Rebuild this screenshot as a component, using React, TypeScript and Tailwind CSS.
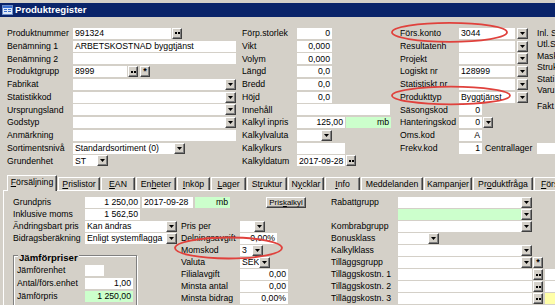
import React from "react";

const FONT = "font-[family-name:'Liberation_Sans',Arial,sans-serif]";

function Arrow() {
  return (
    <svg width="5" height="3" viewBox="0 0 5 3">
      <path d="M0 0h5L2.5 3z" fill="#000" />
    </svg>
  );
}

function Dots() {
  return (
    <svg width="5" height="2" viewBox="0 0 5 2">
      <rect x="0" y="0" width="2" height="2" fill="#000" />
      <rect x="3" y="0" width="2" height="2" fill="#000" />
    </svg>
  );
}

function Btn({ className = "", children }: { className?: string; children?: React.ReactNode }) {
  return (
    <div
      className={`h-[11px] shrink-0 flex items-center justify-center bg-[#d4d0c8] border border-t-white border-l-white border-r-[#404040] border-b-[#404040] shadow-[inset_-1px_-1px_#808080] ${className}`}
    >
      {children}
    </div>
  );
}

function Field({ className = "", right = false, children }: { className?: string; right?: boolean; children?: React.ReactNode }) {
  return (
    <div className={`h-[11px] shrink-0 flex items-center px-[2px] whitespace-nowrap overflow-hidden ${right ? "justify-end" : ""} ${className}`}>
      {children}
    </div>
  );
}

function Combo({ className, bg = "bg-white", children }: { className: string; bg?: string; children?: React.ReactNode }) {
  return (
    <div className="flex shrink-0">
      <Field className={`${className} ${bg}`}>{children}</Field>
      <Btn className="w-[11px]">
        <Arrow />
      </Btn>
    </div>
  );
}

function Row({ className = "h-[12.75px]", children }: { className?: string; children?: React.ReactNode }) {
  return <div className={`flex items-center shrink-0 ${className}`}>{children}</div>;
}

function Label({ className, children }: { className: string; children?: React.ReactNode }) {
  return <span className={`shrink-0 whitespace-nowrap ${className}`}>{children}</span>;
}

function AppIcon() {
  return (
    <svg width="11" height="10" viewBox="0 0 11 10">
      <rect x="0.5" y="0.5" width="10" height="9" fill="#dfe9f7" stroke="#6b8cc7" />
      <rect x="1" y="1" width="9" height="2" fill="#3a6fd0" />
      <rect x="2" y="4" width="3" height="1" fill="#3a6fd0" />
      <rect x="6" y="4" width="3" height="1" fill="#3a6fd0" />
      <rect x="2" y="6" width="3" height="1" fill="#3a6fd0" />
      <rect x="6" y="6" width="3" height="1" fill="#3a6fd0" />
    </svg>
  );
}

const tabs: { text: string; u: number; w: string }[] = [
  { text: "Prislistor", u: 0, w: "w-[42px]" },
  { text: "EAN", u: 0, w: "w-[34px]" },
  { text: "Enheter", u: 2, w: "w-[40px]" },
  { text: "Inköp", u: 0, w: "w-[33px]" },
  { text: "Lager", u: 0, w: "w-[35px]" },
  { text: "Struktur", u: 2, w: "w-[40px]" },
  { text: "Nycklar", u: 1, w: "w-[36px]" },
  { text: "Info", u: 0, w: "w-[35px]" },
  { text: "Meddelanden", u: -1, w: "w-[62px]" },
  { text: "Kampanjer", u: 6, w: "w-[48px]" },
  { text: "Produktfråga", u: 2, w: "w-[60px]" },
  { text: "Försälj", u: 0, w: "w-[40px]" },
];

function TabText({ text, u }: { text: string; u: number }) {
  if (u < 0) return <>{text}</>;
  return (
    <>
      {text.slice(0, u)}
      <span className="underline">{text[u]}</span>
      {text.slice(u + 1)}
    </>
  );
}

export default function App() {
  return (
    <div className={`relative w-[555px] h-[305px] overflow-hidden bg-[#d4d0c8] text-black text-[8.7px] leading-none ${FONT}`}>
      {/* title bar */}
      <div className="pt-[3px]">
        <div className="h-[14px] bg-[#0a246a] flex items-center pl-[2px] gap-[2px]">
          <AppIcon />
          <span className="text-white font-bold text-[9.6px]">Produktregister</span>
        </div>
      </div>

      {/* upper form */}
      <div className="h-[158px] pt-[10px] pl-[7px] flex">
        <div className="w-[235px] shrink-0 flex flex-col">
          <Row>
            <Label className="w-[66px]">Produktnummer</Label>
            <Field className="w-[98px] bg-white">991324</Field>
            <Btn className="w-[10px] ml-[1px]"><Dots /></Btn>
          </Row>
          <Row>
            <Label className="w-[66px]">Benämning 1</Label>
            <Field className="w-[163px] bg-white">ARBETSKOSTNAD byggtjänst</Field>
          </Row>
          <Row>
            <Label className="w-[66px]">Benämning 2</Label>
            <Field className="w-[163px] bg-white" />
          </Row>
          <Row>
            <Label className="w-[66px]">Produktgrupp</Label>
            <Field className="w-[54px] bg-white">8999</Field>
            <Btn className="w-[10px] ml-[1px]"><Dots /></Btn>
            <Btn className="w-[10px] ml-[2px] font-bold text-[9px]">*</Btn>
          </Row>
          <Row>
            <Label className="w-[66px]">Fabrikat</Label>
            <Combo className="w-[152px]" />
          </Row>
          <Row>
            <Label className="w-[66px]">Statistikkod</Label>
            <Combo className="w-[152px]" />
          </Row>
          <Row>
            <Label className="w-[66px]">Ursprungsland</Label>
            <Combo className="w-[152px]" />
          </Row>
          <Row>
            <Label className="w-[66px]">Godstyp</Label>
            <Combo className="w-[152px]" />
          </Row>
          <Row>
            <Label className="w-[66px]">Anmärkning</Label>
            <Field className="w-[163px] bg-white" />
          </Row>
          <Row>
            <Label className="w-[66px]">Sortimentsnivå</Label>
            <Combo className="w-[101px]">Standardsortiment (0)</Combo>
          </Row>
          <Row>
            <Label className="w-[66px]">Grundenhet</Label>
            <Combo className="w-[24px]">ST</Combo>
          </Row>
        </div>

        <div className="w-[158px] shrink-0 flex flex-col">
          {[
            ["Förp.storlek", "0"],
            ["Vikt", "0,000"],
            ["Volym", "0,000"],
            ["Längd", "0,0"],
            ["Bredd", "0,0"],
            ["Höjd", "0,0"],
          ].map(([l, v]) => (
            <Row key={l}>
              <Label className="w-[55px]">{l}</Label>
              <Field right className="w-[35px] bg-white">{v}</Field>
            </Row>
          ))}
          <Row>
            <Label className="w-[55px]">Innehåll</Label>
            <Field className="w-[93px] bg-white" />
          </Row>
          <Row>
            <Label className="w-[55px]">Kalkyl inpris</Label>
            <Field right className="w-[48px] bg-white">125,00</Field>
            <Field right className="w-[45px] ml-[1px] bg-[#ccffcc]">mb</Field>
          </Row>
          <Row>
            <Label className="w-[55px]">Kalkylvaluta</Label>
            <Combo className="w-[24px]" />
          </Row>
          <Row>
            <Label className="w-[55px]">Kalkylkurs</Label>
            <Field className="w-[48px] bg-white" />
          </Row>
          <Row>
            <Label className="w-[55px]">Kalkyldatum</Label>
            <Field className="w-[48px] bg-white">2017-09-28</Field>
            <Btn className="w-[10px] ml-[1px]"><Dots /></Btn>
          </Row>
        </div>

        <div className="w-[137px] shrink-0 flex flex-col">
          {[
            ["Förs.konto", "3044"],
            ["Resultatenh", ""],
            ["Projekt", ""],
            ["Logiskt nr", "128999"],
            ["Statistiskt nr", ""],
            ["Produkttyp", "Byggtjänst"],
          ].map(([l, v]) => (
            <Row key={l}>
              <Label className="w-[59px]">{l}</Label>
              <Field className="w-[56px] bg-white">{v}</Field>
              <Btn className="w-[11px] ml-[1.5px]"><Arrow /></Btn>
            </Row>
          ))}
          <Row>
            <Label className="w-[59px]">Säsongskod</Label>
            <Field right className="w-[23px] bg-white">0</Field>
          </Row>
          <Row>
            <Label className="w-[59px]">Hanteringskod</Label>
            <Field right className="w-[23px] bg-white">0</Field>
            <Btn className="w-[10px] ml-[1px]"><Arrow /></Btn>
          </Row>
          <Row>
            <Label className="w-[59px]">Oms.kod</Label>
            <Field right className="w-[23px] bg-white">A</Field>
          </Row>
          <Row>
            <Label className="w-[59px]">Frekv.kod</Label>
            <Field right className="w-[23px] bg-white">1</Field>
            <Label className="w-[52px] ml-[3px]">Centrallager</Label>
            <Field className="w-[18px] bg-white" />
          </Row>
        </div>

        <div className="flex-1 flex flex-col pt-[0.5px]">
          {["Inl. S", "Utl.S", "Mask", "Struk", "Stati", "Varu"].map((l) => (
            <Row key={l} className="h-[11.5px]">
              <Label className="w-auto">{l}</Label>
            </Row>
          ))}
          <Row className="h-[11.5px] mt-[4px]">
            <Label className="w-auto">Fakt</Label>
          </Row>
        </div>
      </div>

      {/* tabs */}
      <div className="relative z-10 h-[15px] pl-[7px] flex items-end">
        <div className="w-[50px] h-[16px] -mb-[1px] bg-[#d4d0c8] border-t border-l border-white border-r border-r-[#404040] shadow-[inset_-1px_0_#808080] flex items-center justify-center pb-[2px] shrink-0">
          <TabText text="Försäljning" u={0} />
        </div>
        {tabs.map((t) => (
          <div
            key={t.text}
            className={`${t.w} h-[13px] ml-[1px] border-t border-l border-white border-r border-r-[#404040] shadow-[inset_-1px_0_#808080] flex items-center justify-center shrink-0 whitespace-nowrap overflow-hidden`}
          >
            <TabText text={t.text} u={t.u} />
          </div>
        ))}
      </div>

      {/* tab panel */}
      <div className="ml-[3px] h-[115px] border-t border-l border-white pt-[5.5px] pl-[9px] flex">
        <div className="w-[318px] shrink-0 flex flex-col">
          <Row className="h-[12px]">
            <Label className="w-[72px]">Grundpris</Label>
            <Field right className="w-[55px] bg-white">1 250,00</Field>
            <Field className="w-[51px] ml-[2px] bg-white">2017-09-28</Field>
            <Field right className="w-[35px] ml-[2px] bg-[#ccffcc]">mb</Field>
            <Btn className="w-[40px] ml-[36px] text-[7.9px] whitespace-nowrap">
              Pris<span className="underline">k</span>alkyl
            </Btn>
          </Row>
          <Row className="h-[12px]">
            <Label className="w-[72px]">Inklusive moms</Label>
            <Field right className="w-[55px] bg-white">1 562,50</Field>
          </Row>
          <div className="flex">
            <div className="w-[168px] shrink-0 flex flex-col">
              <Row className="h-[12px]">
                <Label className="w-[72px]">Ändringsbart pris</Label>
                <Combo className="w-[81px]">Kan ändras</Combo>
              </Row>
              <Row className="h-[12px]">
                <Label className="w-[72px]">Bidragsberäkning</Label>
                <Combo className="w-[81px]">Enligt systemflagga</Combo>
              </Row>
              <div className="mt-[10.5px] w-[124px] border border-[#808080] shadow-[inset_1px_1px_0_white,1px_1px_0_white] pl-[3px] pb-[4px]">
                <div className="-mt-[3px] ml-[1px] px-[1px] w-fit h-[10px] flex items-center bg-[#d4d0c8] font-bold text-[9.6px]">
                  Jämförpriser
                </div>
                <div className="mt-[0.5px] flex flex-col">
                  <Row className="h-[13px]">
                    <Label className="w-[68px]">Jämförenhet</Label>
                    <Field className="w-[19px] bg-white" />
                  </Row>
                  <Row className="h-[13px]">
                    <Label className="w-[68px]">Antal/förs.enhet</Label>
                    <Field right className="w-[48px] bg-white">1,00</Field>
                  </Row>
                  <Row className="h-[13px]">
                    <Label className="w-[68px]">Jämförpris</Label>
                    <Field right className="w-[48px] bg-[#ccffcc]">1 250,00</Field>
                  </Row>
                </div>
              </div>
            </div>
            <div className="w-[150px] shrink-0 flex flex-col">
              <Row className="h-[12px]">
                <Label className="w-[59px]">Pris per</Label>
                <Combo className="w-[14px]" />
              </Row>
              <Row className="h-[12px]">
                <Label className="w-[59px]">Delningsavgift</Label>
                <Field right className="w-[37px] bg-white">0,00%</Field>
              </Row>
              <Row className="h-[12px]">
                <Label className="w-[59px]">Momskod</Label>
                <Combo className="w-[12px]">3</Combo>
              </Row>
              <Row className="h-[12px]">
                <Label className="w-[59px]">Valuta</Label>
                <Combo className="w-[19px]">SEK</Combo>
              </Row>
              {[
                ["Filialavgift", "0,00"],
                ["Minsta antal", "0,00"],
                ["Minsta bidrag", "0,00%"],
              ].map(([l, v]) => (
                <Row key={l} className="h-[12px]">
                  <Label className="w-[59px]">{l}</Label>
                  <Field right className="w-[48px] bg-white">{v}</Field>
                </Row>
              ))}
            </div>
          </div>
        </div>

        <div className="flex-1 flex flex-col">
          <Row className="h-[12px]">
            <Label className="w-[67px]">Rabattgrupp</Label>
            <Combo className="w-[123px]" />
          </Row>
          <Row className="h-[12px]">
            <Label className="w-[67px]" />
            <Combo className="w-[123px]" bg="bg-[#ccffcc]" />
          </Row>
          <Row className="h-[12px]">
            <Label className="w-[67px]">Kombrabgrupp</Label>
            <Combo className="w-[123px]" />
          </Row>
          <Row className="h-[12px]">
            <Label className="w-[67px]">Bonusklass</Label>
            <Combo className="w-[30px]" />
          </Row>
          <Row className="h-[12px]">
            <Label className="w-[67px]">Kalkylklass</Label>
            <Combo className="w-[123px]" />
          </Row>
          <Row className="h-[12px]">
            <Label className="w-[67px]">Tilläggsgrupp</Label>
            <Combo className="w-[123px]" />
            <Btn className="w-[10px] ml-[1px] font-bold text-[9px]">*</Btn>
          </Row>
          {["1", "2", "3"].map((n) => (
            <Row key={n} className="h-[12px]">
              <Label className="w-[67px]">Tilläggskostn. {n}</Label>
              <Field className="w-[134px] bg-white" />
              <Btn className="w-[10px] ml-[1px]"><Dots /></Btn>
              <Field className={`w-[10px] ml-[2px] ${n === "3" ? "bg-[#ffffa8]" : "bg-white"}`} />
            </Row>
          ))}
        </div>
      </div>

      {/* red highlight marks */}
      <svg className="absolute inset-0 pointer-events-none z-20" width="555" height="305" viewBox="0 0 555 305">
        <g fill="none" stroke="#e0413c" strokeWidth="1.8">
          <ellipse cx="449.5" cy="32.3" rx="57.5" ry="9.5" />
          <ellipse cx="451" cy="95.5" rx="59" ry="8.8" />
          <ellipse cx="228.5" cy="248" rx="53.5" ry="10.5" />
        </g>
      </svg>
    </div>
  );
}
